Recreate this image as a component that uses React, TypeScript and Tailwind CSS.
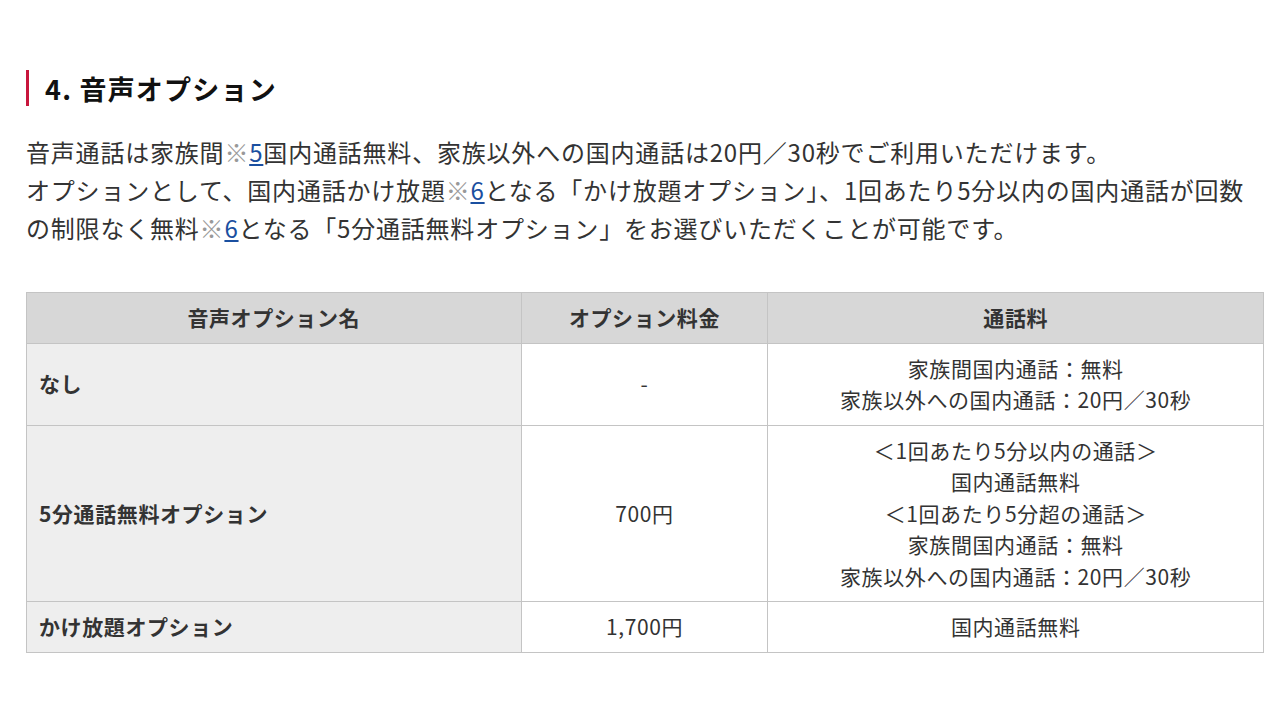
import React from 'react'

const font = { fontFamily: '"Noto Sans CJK JP", "Noto Sans", sans-serif' }

function Note({ n }: { n: string }) {
  return (
    <>
      <span className="text-[#999]">※</span>
      <a className="text-[#1a4fa0] underline underline-offset-2">{n}</a>
    </>
  )
}

export default function App() {
  return (
    <div className="w-[1280px] h-[720px] bg-white text-[#333] pt-[70px] px-[26px]" style={font}>
      <div className="flex items-center border-l-[3px] border-[#c8163c] h-[36px] pl-[16px]">
        <h2 className="text-[27px] font-bold text-[#111] leading-none tracking-[1.2px]">4. 音声オプション</h2>
      </div>
      <div className="mt-[27px] -mr-[10px] text-[24px] leading-[38px] tracking-[0.8px] text-[#333]">
        <p>
          音声通話は家族間<Note n="5" />国内通話無料、家族以外への国内通話は20円／30秒でご利用いただけます。
        </p>
        <p>
          オプションとして、国内通話かけ放題<Note n="6" />となる「かけ放題オプション」、1回あたり5分以内の国内通話が回数<br />の制限なく無料<Note n="6" />となる「5分通話無料オプション」をお選びいただくことが可能です。
        </p>
      </div>

      <table className="mt-[45px] w-[1238px] border-collapse text-[21px] leading-[31.5px] tracking-[0.6px] text-[#333]">
        <colgroup>
          <col className="w-[495px]" />
          <col className="w-[247px]" />
          <col className="w-[496px]" />
        </colgroup>
        <thead>
          <tr className="bg-[#d7d7d7]">
            <th className="border border-[#c4c4c4] py-[9px] font-bold">音声オプション名</th>
            <th className="border border-[#c4c4c4] py-[9px] font-bold">オプション料金</th>
            <th className="border border-[#c4c4c4] py-[9px] font-bold">通話料</th>
          </tr>
        </thead>
        <tbody>
          <tr>
            <td className="border border-[#c4c4c4] bg-[#eeeeee] px-[12px] font-bold">なし</td>
            <td className="border border-[#c4c4c4] text-center">-</td>
            <td className="border border-[#c4c4c4] text-center py-[9px]">
              家族間国内通話：無料<br />家族以外への国内通話：20円／30秒
            </td>
          </tr>
          <tr>
            <td className="border border-[#c4c4c4] bg-[#eeeeee] px-[12px] font-bold">5分通話無料オプション</td>
            <td className="border border-[#c4c4c4] text-center">700円</td>
            <td className="border border-[#c4c4c4] text-center py-[9px]">
              ＜1回あたり5分以内の通話＞<br />国内通話無料<br />＜1回あたり5分超の通話＞<br />家族間国内通話：無料<br />家族以外への国内通話：20円／30秒
            </td>
          </tr>
          <tr>
            <td className="border border-[#c4c4c4] bg-[#eeeeee] px-[12px] font-bold">かけ放題オプション</td>
            <td className="border border-[#c4c4c4] text-center">1,700円</td>
            <td className="border border-[#c4c4c4] text-center py-[9px]">国内通話無料</td>
          </tr>
        </tbody>
      </table>
    </div>
  )
}
